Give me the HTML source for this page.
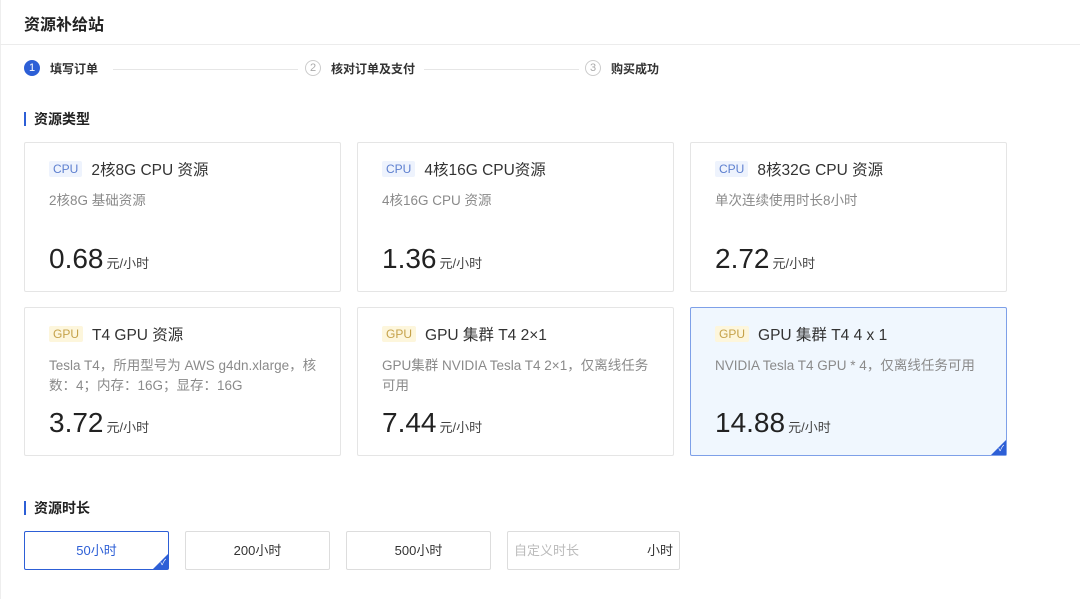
<!DOCTYPE html><html><head><meta charset="utf-8"><style>
*{box-sizing:border-box;margin:0;padding:0}
body{width:1080px;height:599px;background:#fff;font-family:"Liberation Sans","Noto Sans CJK SC",sans-serif;color:#333;position:relative;overflow:hidden}
.frame{position:absolute;left:0;top:0;width:1080px;height:599px;border-left:1px solid #eee}
.hdr{position:absolute;left:0;top:0;width:1080px;height:45px;border-bottom:1px solid #ececec}
.hdr span{position:absolute;left:24px;top:11px;font-size:16px;font-weight:bold;color:#222}
.step{position:absolute;top:59px;height:18px;font-size:12px;color:#333;display:flex;align-items:center;font-weight:bold}
.num{width:16px;height:16px;border-radius:50%;border:1px solid #ccc;color:#aaa;font-size:11px;display:flex;align-items:center;justify-content:center;margin-right:10px;font-weight:normal}
.num.a{background:#2d5fd6;border-color:#2d5fd6;color:#fff}
.line{position:absolute;top:69px;height:1px;background:#e6e6e6}
.sec{position:absolute;left:24px;font-size:14px;font-weight:bold;color:#222;padding-left:8px;border-left:2px solid #2d5fd6;line-height:14px}
.card{position:absolute;width:317px;border:1px solid #e5e5e5;border-radius:2px;background:#fff}
.card.sel{background:#f0f7fe;border-color:#7ea0e8}
.tit{position:absolute;left:24px;top:15px;font-size:15.5px;color:#333;display:flex;align-items:center;white-space:nowrap}
.tag{font-size:12px;padding:1px 4px;margin-right:9px;border-radius:2px}
.cpu{background:#eef3fd;color:#5d7fcf}
.gpu{background:#fdf6dc;color:#c5a24a}
.desc{position:absolute;left:24px;top:48px;width:272px;font-size:13.5px;color:#8a8a8a;line-height:20px}
.price{position:absolute;left:24px;font-size:28px;color:#222;white-space:nowrap}
.price small{font-size:13px;color:#444;margin-left:3px}
.corner{position:absolute;right:0;bottom:0;width:0;height:0;border-left:15px solid transparent;border-bottom:15px solid #2d5fd6}
.ck{position:absolute;right:2px;bottom:1px;color:#fff;font-size:8px}
.btn{position:absolute;top:531px;height:39px;width:145px;border:1px solid #ddd;border-radius:2px;font-size:13px;color:#333;display:flex;align-items:center;justify-content:center;padding-bottom:3px}
.btn.sel{border-color:#2d5fd6;color:#2d5fd6}
</style></head><body><div class="frame"></div>
<div class="hdr"><span>资源补给站</span></div>
<div class="step" style="left:24px"><div class="num a">1</div>填写订单</div>
<div class="line" style="left:113px;width:185px"></div>
<div class="step" style="left:305px"><div class="num">2</div>核对订单及支付</div>
<div class="line" style="left:424px;width:155px"></div>
<div class="step" style="left:585px"><div class="num">3</div>购买成功</div>
<div class="sec" style="top:112px">资源类型</div>
<div class="card" style="left:24px;top:142px;height:150px"><div class="tit"><span class="tag cpu">CPU</span>2核8G CPU 资源</div><div class="desc">2核8G 基础资源</div><div class="price" style="top:100px">0.68<small>元/小时</small></div></div>
<div class="card" style="left:357px;top:142px;height:150px"><div class="tit"><span class="tag cpu">CPU</span>4核16G CPU资源</div><div class="desc">4核16G CPU 资源</div><div class="price" style="top:100px">1.36<small>元/小时</small></div></div>
<div class="card" style="left:690px;top:142px;height:150px"><div class="tit"><span class="tag cpu">CPU</span>8核32G CPU 资源</div><div class="desc">单次连续使用时长8小时</div><div class="price" style="top:100px">2.72<small>元/小时</small></div></div>
<div class="card" style="left:24px;top:307px;height:149px"><div class="tit"><span class="tag gpu">GPU</span>T4 GPU 资源</div><div class="desc">Tesla T4，所用型号为 AWS g4dn.xlarge，核数：4；内存：16G；显存：16G</div><div class="price" style="top:99px">3.72<small>元/小时</small></div></div>
<div class="card" style="left:357px;top:307px;height:149px"><div class="tit"><span class="tag gpu">GPU</span>GPU 集群 T4 2×1</div><div class="desc">GPU集群 NVIDIA Tesla T4 2×1，仅离线任务<br>可用</div><div class="price" style="top:99px">7.44<small>元/小时</small></div></div>
<div class="card sel" style="left:690px;top:307px;height:149px"><div class="tit"><span class="tag gpu">GPU</span>GPU 集群 T4 4 x 1</div><div class="desc">NVIDIA Tesla T4 GPU * 4，仅离线任务可用</div><div class="price" style="top:99px">14.88<small>元/小时</small></div><div class="corner"></div><span class="ck">✓</span></div>
<div class="sec" style="top:501px">资源时长</div>
<div class="btn sel" style="left:24px">50小时<div class="corner"></div><span class="ck">✓</span></div>
<div class="btn" style="left:185px">200小时</div>
<div class="btn" style="left:346px">500小时</div>
<div class="btn" style="left:507px;width:173px;justify-content:space-between;padding:0 6px 3px;color:#bbb">自定义时长<span style="color:#333">小时</span></div>
</body></html>
